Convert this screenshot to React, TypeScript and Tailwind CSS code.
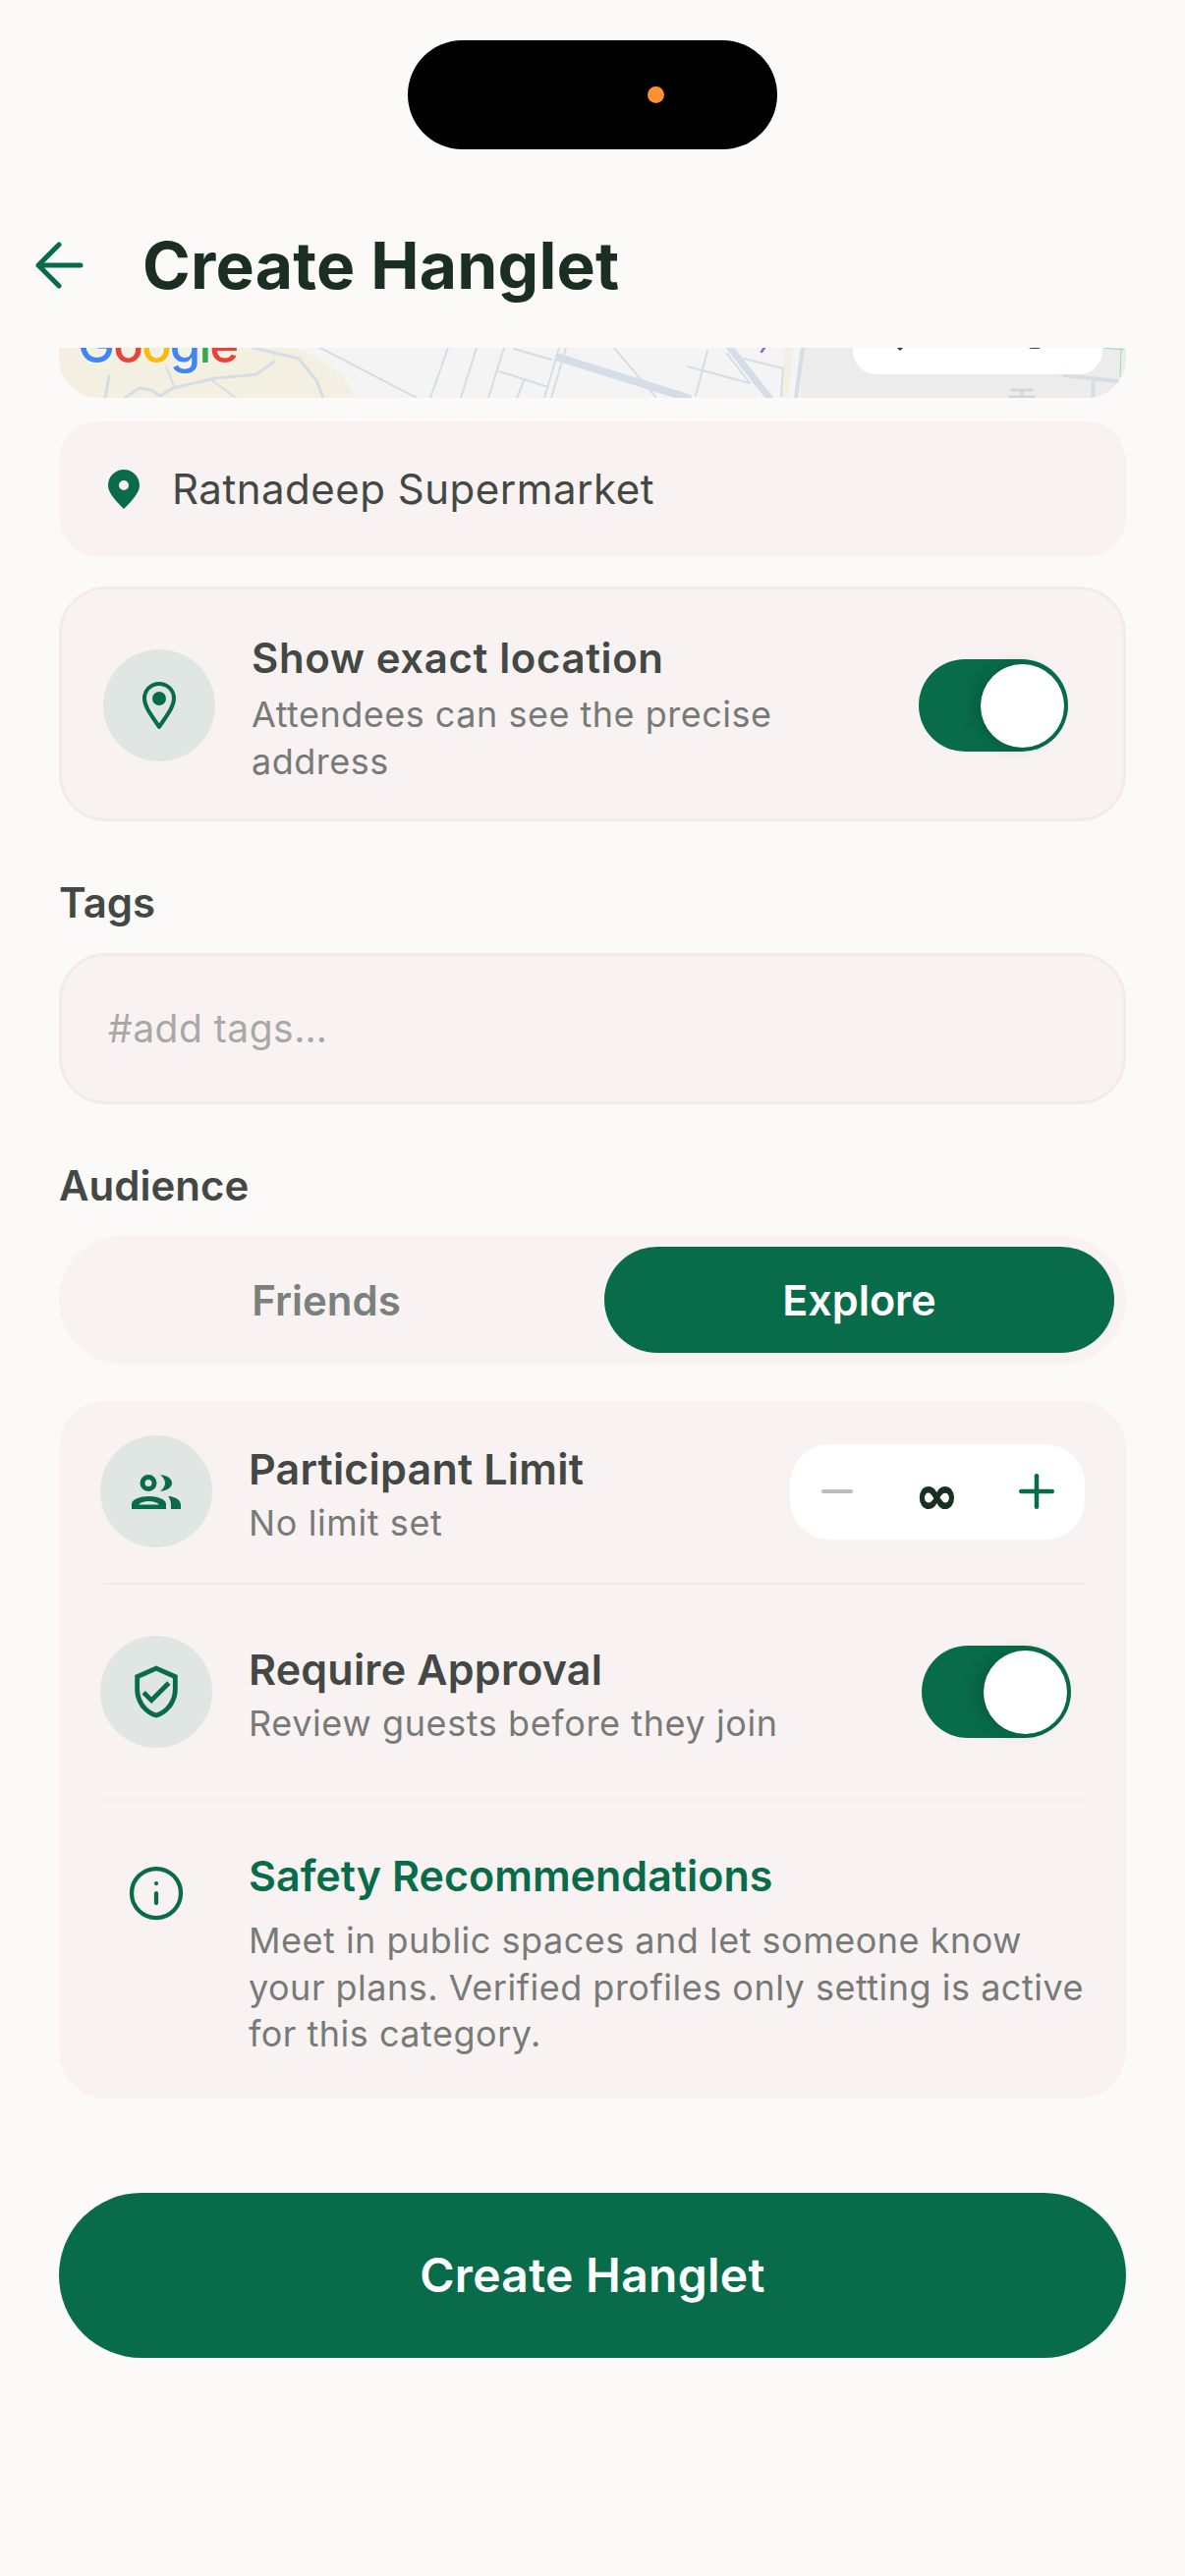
import { Info, Minus, Plus } from "lucide-react";
import { MdOutlineVerifiedUser } from "react-icons/md";

function MapPeek() {
    return (
        <div className="relative h-[51px] overflow-hidden rounded-b-[40px] bg-[#f4f4f5]">
            <svg className="block h-[51px] w-[1086px]" viewBox="60 354 1086 51" fill="none" strokeLinecap="round" strokeLinejoin="round">
                <path d="M60 354H300C345 370 355 390 361 405H60Z" fill="#f3efe1" />
                <path d="M815 354H1146V405H815Z" fill="#ececec" />
                <path d="M803 354L798 405" stroke="#f3efe1" strokeWidth="8" />
                <g stroke="#d5dde6" strokeWidth="3">
                    <path d="M258 354L304 365L322 387L329 405" />
                    <path d="M279 368L261 381L219 385L176 395L163 403L154 397L142 395L127 405" />
                    <path d="M169 373L177 393" strokeWidth="2" />
                    <path d="M217 388L240 405" strokeWidth="2" />
                    <path d="M111 383L107 405" />
                    <path d="M326 354L424 405" strokeWidth="2" />
                    <path d="M456 354L438 405M485 354L469 405M513 354L497 405" strokeWidth="2" />
                    <path d="M508 378L558 394M533 388L526 405" strokeWidth="2" />
                    <path d="M569 354L554 405M576 354L561 405" strokeWidth="2" />
                    <path d="M523 355L561 366" strokeWidth="2" />
                    <path d="M569 364L700 405" strokeWidth="8" />
                    <path d="M625 354L668 405" strokeWidth="2" />
                    <path d="M743 354L783 405" strokeWidth="7" />
                    <path d="M720 357L708 403M700 373L763 390L740 360" strokeWidth="2" />
                    <path d="M757 365L797 375L795 403" strokeWidth="2" />
                    <path d="M817 354L810 405" strokeWidth="4" />
                    <path d="M1083 382L1137 388" strokeWidth="4" />
                    <path d="M1113 385L1112 405" strokeWidth="4" />
                </g>
                <path d="M1141 354L1140 383" stroke="#9bdcc0" strokeWidth="1" />
                <path d="M1123 354L1143 356" stroke="#9bdcc0" strokeWidth="1" />
                <path d="M1030 397H1050M1040 397V403M1028 404H1052" stroke="#d3d6d9" strokeWidth="3" />
                <path d="M778 354L775 358" stroke="#9a5cf0" strokeWidth="2.5" />
            </svg>
            <span className="absolute left-[19px] top-[-37px] text-[51px] leading-[68px] font-medium tracking-[-2px] text-[#4285f4] [text-shadow:0_0_4px_#fff]">
                G<span className="text-[#ea4335]">o</span>
                <span className="text-[#fbbc05]">o</span>
                <span>g</span>
                <span className="text-[#34a853]">l</span>
                <span className="text-[#ea4335]">e</span>
            </span>
            <div className="absolute right-[24px] top-[-30px] flex h-[57px] w-[254px] rounded-[24px] bg-white">
                <span className="ml-[43px] mt-[28px] h-[5px] w-[10px] bg-[#333] [clip-path:polygon(0_0,100%_0,50%_100%)]" />
                <span className="ml-[124px] mt-[26px] h-[5px] w-[16px] rounded-b-full bg-[#444]" />
            </div>
        </div>
    );
}

function Toggle() {
    return (
        <div className="flex h-[94px] w-[152px] shrink-0 items-center justify-end rounded-full bg-[#086c4b] p-[4px]">
            <div className="h-[85px] w-[85px] rounded-full bg-white shadow-[-8px_0_14px_rgba(0,40,25,0.2)]" />
        </div>
    );
}

function IconCircle({ children }: { children: React.ReactNode }) {
    return (
        <div className="flex h-[114px] w-[114px] shrink-0 items-center justify-center rounded-full bg-[#e0e6e3] text-[#086c4b]">
            {children}
        </div>
    );
}

export default function App() {
    return (
        <div className="min-h-[2622px] bg-[#fcfaf8] [font-family:Inter,sans-serif]">
            {/* Status bar */}
            <div className="flex justify-center pt-[41px]">
                <div className="flex h-[111px] w-[376px] items-center justify-end rounded-[56px] bg-black pr-[115px]">
                    <div className="h-[17px] w-[17px] rounded-full bg-[#ff9130]" />
                </div>
            </div>

            {/* Header */}
            <div className="flex h-[202px] items-start pl-[36px] pt-[80px]">
                <div className="flex h-[76px] items-center gap-[60px]">
                    <svg className="h-[48px] w-[49px]" viewBox="0 0 49 48" fill="none" stroke="#086c4b" strokeWidth="5" strokeLinecap="round" strokeLinejoin="round">
                        <path d="M24 3L3 24L24 45M3 24H46" />
                    </svg>
                    <h1 className="text-[66px] leading-[76px] font-bold tracking-[0.2px] text-[#1a2e22]">Create Hanglet</h1>
                </div>
            </div>

            <div className="px-[60px]">
                <MapPeek />

                {/* Picked place */}
                <div className="mt-[24px] flex h-[138px] items-center rounded-[40px] bg-[#f8f3f2] pl-[50px]">
                    <svg className="h-[40px] w-[32px] shrink-0" viewBox="0 0 32 40" fill="#086c4b">
                        <path fillRule="evenodd" d="M16 0C25 0 32 7 32 16C32 24 23 33 16 40C9 33 0 24 0 16C0 7 7 0 16 0ZM16 11A5 5 0 1 0 16 21A5 5 0 1 0 16 11Z" />
                    </svg>
                    <span className="ml-[33px] text-[42px] leading-[48px] tracking-[0.5px] text-[#444845]">Ratnadeep Supermarket</span>
                </div>

                {/* Exact location */}
                <div className="mt-[30px] flex items-center rounded-[48px] border-[3px] border-[#efecea] bg-[#f8f3f2] pb-[34px] pl-[42px] pr-[56px] pt-[37px]">
                    <IconCircle>
                        <svg className="h-[50px] w-[36px]" viewBox="0 0 36 50" fill="none">
                            <path d="M18 47C11 36 3 27 3 18C3 9 10 3 18 3C26 3 33 9 33 18C33 27 25 36 18 47Z" stroke="#086c4b" strokeWidth="4" strokeLinejoin="round" />
                            <circle cx="18" cy="18" r="7" fill="#086c4b" />
                        </svg>
                    </IconCircle>
                    <div className="ml-[37px] min-w-0 flex-1">
                        <div className="text-[42px] leading-[66px] font-semibold tracking-[0.6px] text-[#444845]">Show exact location</div>
                        <div className="w-[560px] text-[36px] leading-[48px] tracking-[0.5px] text-[#777a77]">Attendees can see the precise address</div>
                    </div>
                    <Toggle />
                </div>

                {/* Tags */}
                <div className="mt-[63px] text-[42px] leading-[40px] font-semibold text-[#444845]">Tags</div>
                <div className="mt-[31px] flex h-[154px] items-center rounded-[48px] border-[3px] border-[#efecea] bg-[#f8f3f2] pl-[47px]">
                    <span className="text-[39px] leading-[48px] tracking-[0.5px] text-[#a8a8a6]">#add tags…</span>
                </div>

                {/* Audience */}
                <div className="mt-[63px] text-[42px] leading-[40px] font-semibold text-[#444845]">Audience</div>
                <div className="mt-[31px] flex h-[130px] items-center rounded-full bg-[#f8f3f2] py-[11px] pl-[11px] pr-[12px] shadow-[0_0_6px_rgba(0,0,0,0.02)]">
                    <div className="flex h-[108px] flex-1 items-center justify-center pr-[22px] text-[42px] font-semibold text-[#7a807b]">Friends</div>
                    <div className="flex h-[108px] w-[519px] items-center justify-center rounded-full bg-[#086c4b] text-[43px] font-semibold text-white">Explore</div>
                </div>

                {/* Settings */}
                <div className="mt-[38px] rounded-[48px] bg-[#f8f3f2] px-[42px] pb-[41px] pt-[35px]">
                    <div className="flex items-center">
                        <IconCircle>
                            <svg className="h-[35px] w-[50px]" viewBox="0 0 50 35" fill="currentColor">
                                <circle cx="17" cy="8.5" r="6" fill="none" stroke="currentColor" strokeWidth="5" />
                                <path d="M29 0.3C36 0.3 41 4 41 8.5C41 13 36 16.7 29 16.7C32 14.5 34 11.5 34 8.5C34 5.5 32 2.5 29 0.3Z" />
                                <path fillRule="evenodd" d="M0 35V30C0 25.5 8 22 17.5 22C27 22 35 25.5 35 30V35ZM7 30.5H28C26 28.5 22 27 17.5 27C13 27 9 28.5 7 30.5Z" />
                                <path d="M39 22C45 23 50 26 50 31V35H40V31C40 27.5 39 24 37 22Z" />
                            </svg>
                        </IconCircle>
                        <div className="ml-[37px] flex-1 pt-[7px]">
                            <div className="text-[43px] leading-[44px] font-semibold tracking-[0.2px] text-[#444845]">Participant Limit</div>
                            <div className="mt-[13px] text-[36px] leading-[40px] tracking-[0.6px] text-[#777a77]">No limit set</div>
                        </div>
                        <div className="flex h-[97px] w-[300px] items-center justify-between rounded-[40px] bg-white pl-[27px] pr-[22px]">
                            <Minus className="h-[48px] w-[48px] -ml-[3px] text-[#bdbdbd]" strokeWidth={2} />
                            <span className="mt-[8px] ml-[3px] text-[52px] leading-[58px] font-bold text-[#1a2e22] [-webkit-text-stroke:1.5px_#1a2e22] [font-family:'DejaVu_Sans',sans-serif]">∞</span>
                            <Plus className="h-[54px] w-[54px] text-[#086c4b]" strokeWidth={2} />
                        </div>
                    </div>
                    <div className="ml-[3px] mt-[36px] h-[2px] bg-[#efecea]" />
                    <div className="mt-[52px] flex items-center pr-[14px]">
                        <IconCircle>
                            <MdOutlineVerifiedUser className="h-[58px] w-[58px]" />
                        </IconCircle>
                        <div className="ml-[37px] flex-1 pt-[7px]">
                            <div className="text-[43px] leading-[44px] font-semibold tracking-[0.2px] text-[#444845]">Require Approval</div>
                            <div className="mt-[13px] text-[36px] leading-[40px] tracking-[0.6px] text-[#777a77]">Review guests before they join</div>
                        </div>
                        <Toggle />
                    </div>
                    <div className="ml-[3px] mt-[52px] h-[2px] bg-[#f2eeed]" />
                    <div className="flex pt-[54px]">
                        <div className="flex w-[114px] shrink-0 justify-center pt-[10px]">
                            <Info className="h-[60px] w-[60px] text-[#086c4b]" strokeWidth={1.7} />
                        </div>
                        <div className="ml-[37px] flex-1">
                            <div className="text-[43px] leading-[44px] font-semibold text-[#086c4b]">Safety Recommendations</div>
                            <div className="mt-[21px] whitespace-nowrap text-[36px] leading-[47.5px] tracking-[0.5px] text-[#777a77]">
                                Meet in public spaces and let someone know
                                <br />
                                your plans. Verified profiles only setting is active
                                <br />
                                for this category.
                            </div>
                        </div>
                    </div>
                </div>

                <button className="mt-[96px] flex h-[168px] w-full items-center justify-center rounded-full bg-[#086c4b] text-[48px] font-semibold tracking-[0.3px] text-white">
                    Create Hanglet
                </button>
            </div>
        </div>
    );
}
